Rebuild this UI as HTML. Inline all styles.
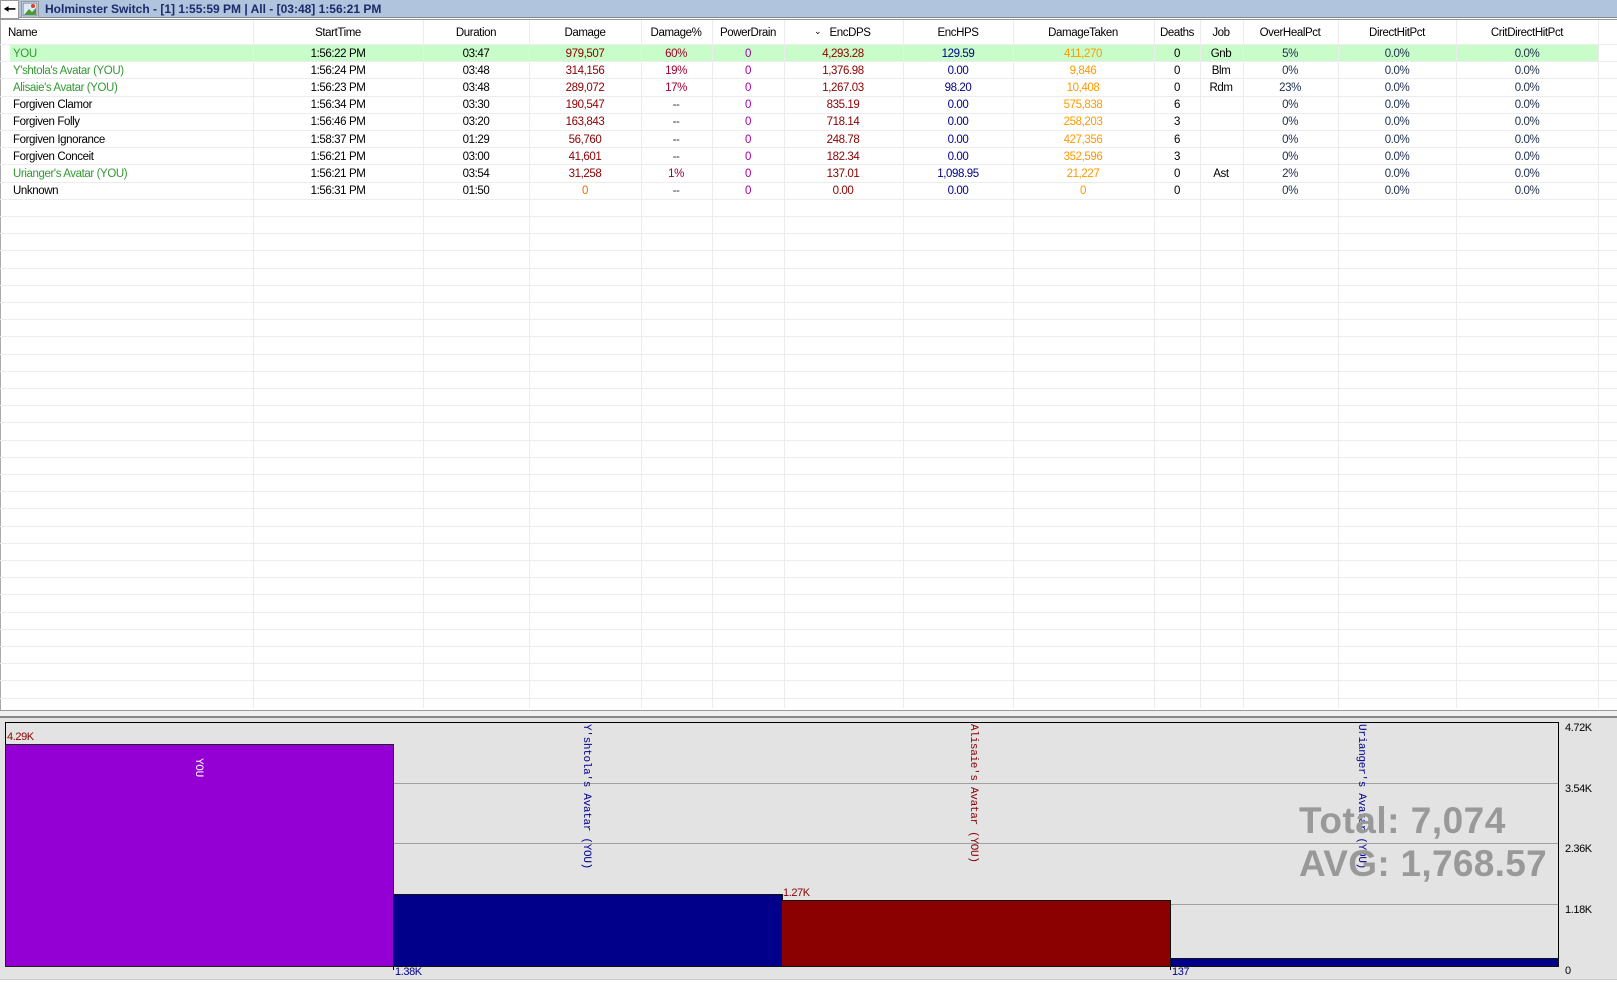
<!DOCTYPE html>
<html><head><meta charset="utf-8"><style>
*{margin:0;padding:0;box-sizing:border-box}
body{width:1617px;height:983px;background:#fff;font-family:"Liberation Sans",sans-serif;font-size:11.5px;letter-spacing:-0.4px;position:relative;overflow:hidden}
.a{position:absolute}
.t{position:absolute;white-space:nowrap;transform:translateX(-50%)}
.vl{position:absolute;top:20px;height:688px;width:1px;background:#ececec}
.hl{position:absolute;left:0;width:1617px;height:1px;background:#ececec}
.vt{position:absolute;writing-mode:vertical-rl;font-family:"Liberation Mono",monospace;font-size:11px;letter-spacing:-0.3px;white-space:nowrap}
</style></head><body>
<div class="a" style="left:0;top:0;width:1617px;height:18px;background:#b0c4de;border-bottom:1px solid #888"></div>
<div class="a" style="left:0;top:0;width:19px;height:19px;background:#fff;border:1px solid #999;font-size:14px;line-height:17px;text-align:center;font-weight:bold">&#129044;</div>
<div class="a" style="left:21px;top:1px;width:18px;height:17px;background:#fff;border:1px solid #999"><svg width="16" height="15"><rect x="1" y="1" width="14" height="13" fill="#dfe8f5" stroke="#6a7f9a"/><path d="M2 13 L7 7 L10 10 L14 6 L14 13 Z" fill="#4a9a3a"/><circle cx="11" cy="4" r="2" fill="#e04020"/></svg></div>
<div class="a" style="left:45px;top:2px;font-weight:bold;color:#1c2a6a;font-size:12px;letter-spacing:0">Holminster Switch - [1] 1:55:59 PM | All - [03:48] 1:56:21 PM</div>
<div class="a" style="left:0;top:19px;width:1617px;height:1px;background:#999"></div>
<div class="a" style="left:0;top:20px;width:1px;height:690px;background:#aaa"></div>
<div class="a" style="left:10px;top:45px;width:1588px;height:16px;background:#c8fcc8"></div>
<div id="g"></div>
<div class="a" style="left:0;top:710px;width:1617px;height:1px;background:#999"></div>
<div class="a" style="left:0;top:711px;width:1617px;height:5px;background:#f0f0f0"></div>
<div class="a" style="left:0;top:716px;width:1617px;height:2px;background:#888"></div>
<div class="a" style="left:0;top:718px;width:1617px;height:261px;background:#e3e3e3"></div>
<div class="a" style="left:5px;top:722px;width:1554px;height:245px;border:1px solid #000;background:#e3e3e3"></div>
<div class="a" style="left:6px;top:783px;width:1552px;height:1px;background:#a0a0a0"></div>
<div class="a" style="left:6px;top:843px;width:1552px;height:1px;background:#a0a0a0"></div>
<div class="a" style="left:6px;top:904px;width:1552px;height:1px;background:#a0a0a0"></div>
<div class="a" style="left:5px;top:744px;width:389px;height:223px;background:#9400d3;border:1px solid #222"></div>
<div class="a" style="left:393px;top:894px;width:390px;height:73px;background:#00008b;border:1px solid #111"></div>
<div class="a" style="left:781px;top:900px;width:390px;height:67px;background:#8b0000;border:1px solid #111"></div>
<div class="a" style="left:1170px;top:958px;width:389px;height:9px;background:#00008b;border:1px solid #111"></div>
<div class="a" style="left:7px;top:731px;color:#8b0000;font-size:11px">4.29K</div>
<div class="a" style="left:395px;top:966px;color:#00008b;font-size:11px">1.38K</div>
<div class="a" style="left:783px;top:887px;color:#8b0000;font-size:11px">1.27K</div>
<div class="a" style="left:1172px;top:966px;color:#00008b;font-size:11px">137</div>
<div class="a" style="left:393px;top:966px;width:1px;height:4px;background:#000"></div>
<div class="a" style="left:1170px;top:966px;width:1px;height:4px;background:#000"></div>
<div class="vt" style="left:192px;top:758px;color:#fff">YOU</div>
<div class="vt" style="left:580px;top:724px;color:#00008b">Y'shtola's Avatar (YOU)</div>
<div class="vt" style="left:967px;top:724px;color:#8b0000">Alisaie's Avatar (YOU)</div>
<div class="vt" style="left:1355px;top:724px;color:#00008b">Urianger's Avatar (YOU)</div>
<div class="a" style="left:1299px;top:800px;font-weight:bold;font-size:37px;letter-spacing:0.5px;color:#999">Total: 7,074</div>
<div class="a" style="left:1299px;top:843px;font-weight:bold;font-size:37px;letter-spacing:0.3px;color:#999">AVG: 1,768.57</div>
<div class="a" style="left:1565px;top:722px;font-size:11px">4.72K</div>
<div class="a" style="left:1565px;top:783px;font-size:11px">3.54K</div>
<div class="a" style="left:1565px;top:843px;font-size:11px">2.36K</div>
<div class="a" style="left:1565px;top:904px;font-size:11px">1.18K</div>
<div class="a" style="left:1565px;top:965px;font-size:11px">0</div>
<div class="a" style="left:0;top:979px;width:1617px;height:1px;background:#ccc"></div>
<script>
var cols=[253,423,529,641,712,784,903,1013,1154,1200,1243,1338,1456,1598];
var g='';
cols.forEach(function(x){g+='<div class="vl" style="left:'+x+'px"></div>';});
for(var i=0;i<39;i++){var y=Math.round(44+i*17.2);g+='<div class="hl" style="top:'+y+'px"></div>';}
var cen=[338,476,585,676,748,850,958,1083,1177,1221,1290,1397,1527];
var hd=['StartTime','Duration','Damage','Damage%','PowerDrain','EncDPS','EncHPS','DamageTaken','Deaths','Job','OverHealPct','DirectHitPct','CritDirectHitPct'];
g+='<div class="a" style="left:8px;top:27px">Name</div>';
hd.forEach(function(h,k){g+='<div class="t" style="left:'+cen[k]+'px;top:27px">'+h+'</div>';});
g+='<div class="a" style="left:814px;top:26px;font-size:9px">&#8964;</div>';
cen[5]=843;
var clr=['#000','#000','#8b0000','#a00030','#a000a0','#8b0000','#00008b','#ff9900','#000','#000','#203050','#203050','#203050'];
var rows=[
['YOU',1,'1:56:22 PM','03:47','979,507','60%','0','4,293.28','129.59','411,270','0','Gnb','5%'],
["Y'shtola's Avatar (YOU)",1,'1:56:24 PM','03:48','314,156','19%','0','1,376.98','0.00','9,846','0','Blm','0%'],
["Alisaie's Avatar (YOU)",1,'1:56:23 PM','03:48','289,072','17%','0','1,267.03','98.20','10,408','0','Rdm','23%'],
['Forgiven Clamor',0,'1:56:34 PM','03:30','190,547','--','0','835.19','0.00','575,838','6','','0%'],
['Forgiven Folly',0,'1:56:46 PM','03:20','163,843','--','0','718.14','0.00','258,203','3','','0%'],
['Forgiven Ignorance',0,'1:58:37 PM','01:29','56,760','--','0','248.78','0.00','427,356','6','','0%'],
['Forgiven Conceit',0,'1:56:21 PM','03:00','41,601','--','0','182.34','0.00','352,596','3','','0%'],
["Urianger's Avatar (YOU)",1,'1:56:21 PM','03:54','31,258','1%','0','137.01','1,098.95','21,227','0','Ast','2%'],
['Unknown',0,'1:56:31 PM','01:50','0','--','0','0.00','0.00','0','0','','0%']];
rows.forEach(function(r,i){var y=Math.round(47.5+i*17.2);
g+='<div class="a" style="left:13px;top:'+y+'px;color:'+(r[1]?'#339933':'#000')+'">'+r[0]+'</div>';
var v=r.slice(2).concat(['0.0%','0.0%']);
v.forEach(function(s,k){var c=clr[k];if(k==2&&s=='0')c='#e07000';if(k==3&&s=='--')c='#333';g+='<div class="t" style="left:'+cen[k]+'px;top:'+y+'px;color:'+c+'">'+s+'</div>';});});
document.getElementById('g').innerHTML=g;
</script>
</body></html>
